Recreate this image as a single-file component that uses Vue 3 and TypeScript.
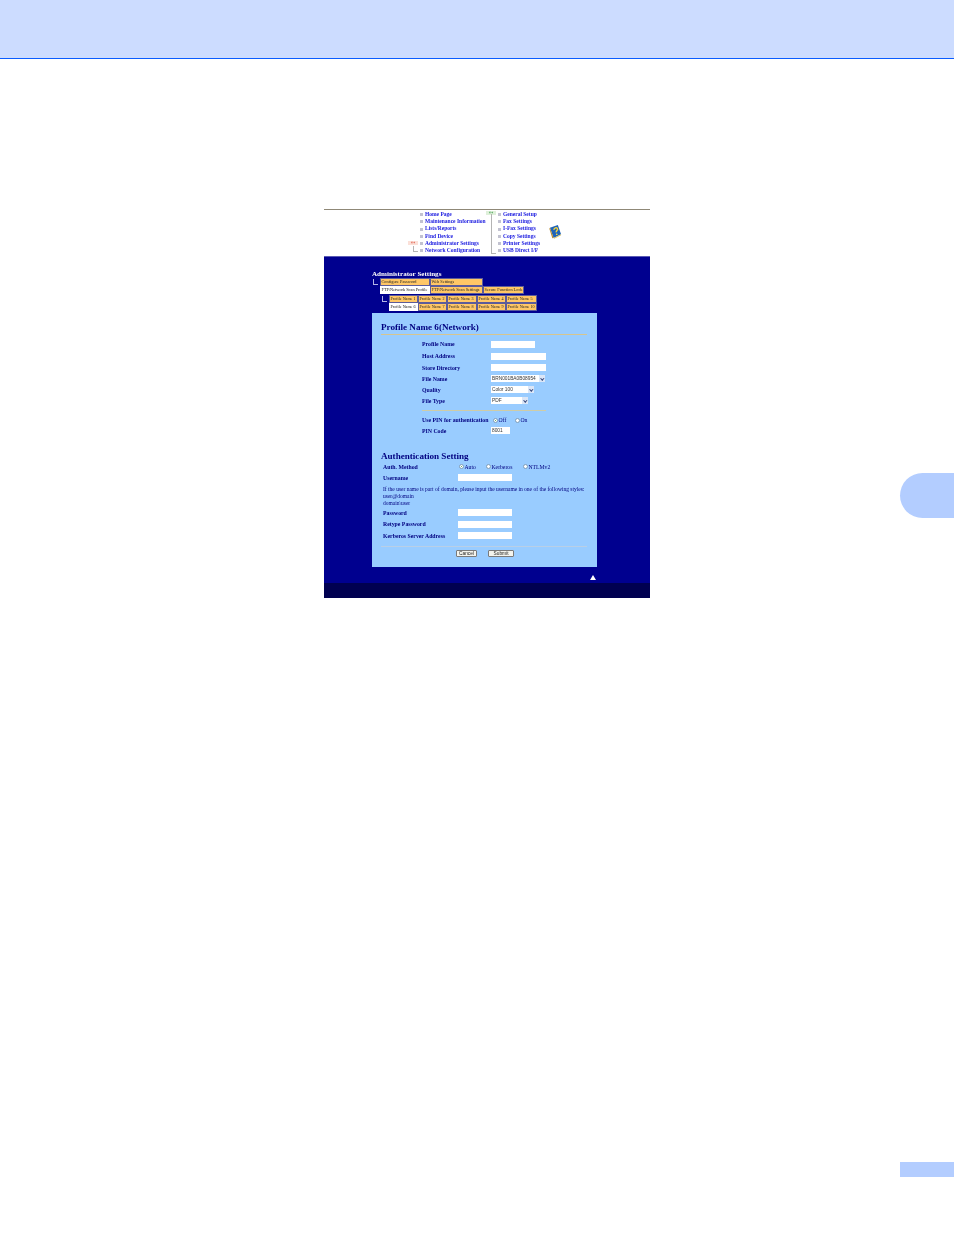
<script setup lang="ts">
const navLeft = ['Home Page', 'Maintenance Information', 'Lists/Reports', 'Find Device', 'Administrator Settings', 'Network Configuration']
const navRight = ['General Setup', 'Fax Settings', 'I-Fax Settings', 'Copy Settings', 'Printer Settings', 'USB Direct I/F']
const profiles = [1, 2, 3, 4, 5, 6, 7, 8, 9, 10].map((n) => `Profile Name ${n}`)
</script>

<template>
  <div class="page">
    <header class="band"></header>
    <main class="body">
      <div class="shot">
        <nav class="nav">
          <div class="col left">
            <span class="mark m-left">›››</span>
            <span class="hook h-left"></span>
            <div v-for="n in navLeft" :key="n" class="nav-item"><i class="bullet"></i>{{ n }}</div>
          </div>
          <div class="col right">
            <span class="mark m-right">›››</span>
            <span class="hook h-right"></span>
            <div v-for="n in navRight" :key="n" class="nav-item"><i class="bullet"></i>{{ n }}</div>
          </div>
          <svg class="help" viewBox="0 0 14 16" width="13" height="15">
            <path d="M1 4 9.5 1 13 11 5 15 Z" fill="#1f64b8" />
            <path d="M1 4 5 15 3.6 15.4 0.4 5 Z" fill="#b9892a" />
            <path d="M5 15 13 11 13 12 5.6 15.8 Z" fill="#d8c46a" />
            <path d="M5.4 6.2C5.2 4 8.6 3 9.2 5.2 9.6 6.8 7.4 7.2 7.8 9" fill="none" stroke="#f5d33c" stroke-width="1.5" />
            <circle cx="8.3" cy="11" r="0.9" fill="#f5d33c" />
          </svg>
        </nav>
        <section class="blue">
          <h2 class="admin">Administrator Settings</h2>
          <div class="tree">
            <span class="elbow e1"></span>
            <div class="tabs t1">
              <span class="tab">Configure Password</span>
              <span class="tab">Web Settings</span>
              <span class="tab empty"></span>
              <span class="tab on">FTP/Network Scan Profile</span>
              <span class="tab">FTP/Network Scan Settings</span>
              <span class="tab">Secure Function Lock</span>
            </div>
          </div>
          <div class="tree sub">
            <span class="elbow e2"></span>
            <div class="tabs t2">
              <span v-for="(p, i) in profiles" :key="p" class="tab" :class="{ on: i === 5 }">{{ p }}</span>
            </div>
          </div>
          <div class="panel">
            <h3 class="title">Profile Name 6(Network)</h3>
            <hr class="rule" />
            <div class="form upper">
              <label>Profile Name</label><input class="w44" />
              <label>Host Address</label><input class="w55" />
              <label>Store Directory</label><input class="w55" />
              <label>File Name</label><span class="select w54">BRN001BA0B08954<b></b></span>
              <label>Quality</label><span class="select w43">Color 100<b></b></span>
              <label>File Type</label><span class="select w37">PDF<b></b></span>
            </div>
            <hr class="rule short" />
            <div class="form pin">
              <label>Use PIN for authentication</label>
              <span class="radios pin-radios"><span class="radio"><i class="dot sel"></i>Off</span><span class="radio"><i class="dot"></i>On</span></span>
              <label>PIN Code</label><input class="w19" value="8001" />
            </div>
            <h3 class="title auth">Authentication Setting</h3>
            <div class="form lower">
              <label>Auth. Method</label>
              <span class="radios auth-radios"><span class="radio"><i class="dot sel"></i>Auto</span><span class="radio"><i class="dot"></i>Kerberos</span><span class="radio"><i class="dot"></i>NTLMv2</span></span>
              <label>Username</label><input class="w54" />
            </div>
            <p class="note">If the user name is part of domain, please input the username in one of the following styles:<br />user@domain<br />domain\user</p>
            <div class="form lower pw">
              <label>Password</label><input class="w54" />
              <label>Retype Password</label><input class="w54" />
              <label>Kerberos Server Address</label><input class="w54" />
            </div>
            <hr class="rule end" />
            <div class="buttons">
              <button class="btn cancel">Cancel</button>
              <button class="btn submit">Submit</button>
            </div>
          </div>
          <div class="top-row"><i class="top"></i></div>
        </section>
        <footer class="foot"></footer>
      </div>
      <div class="side"></div>
    </main>
    <div class="pageno"></div>
  </div>
</template>

<style>
html, body { margin: 0; background: #fff; }
</style>

<style scoped>
.page { width: 954px; height: 1235px; position: relative; overflow: hidden; background: #fff; font-family: "Liberation Serif", serif; }
.band { height: 58px; background: #ccdcff; border-bottom: 1px solid #0a5cff; }
.body { display: flex; padding: 150px 0 0 324px; }
.shot { width: 326px; height: 389px; display: flex; flex-direction: column; filter: blur(0.25px); }
.nav { height: 47px; border-top: 1px solid #8f8877; box-sizing: border-box; position: relative; background: #fff; display: flex; padding: 1px 0 0 95px; flex: none; }
.col { position: relative; box-sizing: border-box; }
.left { width: 78px; padding-left: 6px; }
.right { width: 62px; padding-left: 6px; }
.nav-item { font: bold 5.5px/7.2px "Liberation Serif", serif; color: #1a1ae0; white-space: nowrap; position: relative; }
.bullet { position: absolute; left: -5.5px; top: 2.2px; width: 3px; height: 3px; background: #c2c2d0; }
.mark { position: absolute; width: 10px; height: 4px; background: #dff0da; color: #1a8a2c; font: bold 4px/4px "Liberation Sans", sans-serif; text-align: center; overflow: hidden; }
.m-left { left: -11px; top: 30px; background: #fbe0d8; color: #d8321e; }
.m-right { left: -11px; top: 0; }
.hook { position: absolute; border-left: 1px solid #b4b4b4; border-bottom: 1px solid #b4b4b4; }
.h-left { left: -6px; top: 35px; width: 4px; height: 5px; }
.h-right { left: -6px; top: 3px; width: 4px; height: 39px; }
.help { position: absolute; left: 225px; top: 14px; }
.blue { height: 327px; flex: none; background: #00008f; border-top: 1px solid #5a5ab4; box-sizing: border-box; padding: 14px 0 0 48px; position: relative; }
.admin { margin: 0; font: bold 7.1px/7px "Liberation Serif", serif; color: #fff; white-space: nowrap; }
.tree { position: relative; padding-left: 8px; }
.sub { padding-left: 17px; margin-top: 1px; }
.elbow { position: absolute; border-left: 1px solid #b4b4e6; border-bottom: 1px solid #b4b4e6; width: 4px; height: 5px; }
.e1 { left: 1px; top: 1px; }
.e2 { left: 10px; top: 1px; }
.tabs { display: grid; }
.t1 { grid-template-columns: 50px 53px 41px; grid-auto-rows: 8px; }
.t2 { grid-template-columns: 29px 29px 30px 29px 31px; grid-auto-rows: 8px; }
.tab { box-sizing: border-box; background: #ffc766; border: 1px solid #5c5c9a; font-size: 4.3px; line-height: 6px; color: #222; padding-left: 0.5px; white-space: nowrap; overflow: hidden; }
.t2 .tab { font-size: 4.1px; }
.tab.on { background: #fff; border-color: #fff; color: #111; }
.tab.empty { visibility: hidden; }
.panel { width: 225px; height: 254px; box-sizing: border-box; background: #99ccff; margin-top: 2px; padding: 9px 10px 0 9px; }
.title { margin: 0; font: bold 9.1px/10px "Liberation Serif", serif; color: #000080; white-space: nowrap; }
.rule { margin: 2px 0 0; border: 0; height: 1px; background: #d7c58e; }
.rule.short { margin: 4px 0 0 41px; width: 124px; background: #cfcca6; }
.rule.end { margin: 4px 0 0; background: #b9cfe6; }
.form { display: grid; align-items: center; }
.form label { font-weight: bold; font-size: 5.8px; color: #000080; white-space: nowrap; }
.form input, .select { box-sizing: border-box; height: 7px; border: 0; padding: 0 0 0 1px; background: #fff; font: 4.8px/7px "Liberation Sans", sans-serif; color: #333; display: block; outline: none; }
.upper { grid-template-columns: 69px auto; grid-template-rows: 12px 12px 11px 11px 11px 11px; justify-content: start; margin: 3px 0 0 41px; justify-items: start; }
.pin { grid-template-columns: 69px auto; grid-template-rows: 10px 11px; justify-content: start; margin: 4px 0 0 41px; justify-items: start; }
.lower { grid-template-columns: 75px auto; grid-auto-rows: 11px; justify-content: start; margin: 0 0 0 2px; justify-items: start; }
.pw { margin-top: 0; grid-auto-rows: 11.5px; }
.w19 { width: 19px; } .w37 { width: 37px; } .w43 { width: 43px; } .w44 { width: 44px; } .w54 { width: 54px; } .w55 { width: 55px; }
.select { position: relative; overflow: hidden; white-space: nowrap; }
.select b { position: absolute; right: 0; top: 0; width: 6px; height: 7px; background: #dbe6f7; }
.select b::after { content: ""; position: absolute; left: 2px; top: 2.2px; width: 1.6px; height: 1.6px; border-right: 1px solid #33457a; border-bottom: 1px solid #33457a; transform: rotate(45deg); }
.radios { display: grid; align-items: center; }
.pin-radios { grid-template-columns: 22px 16px; margin-left: 2px; }
.auth-radios { grid-template-columns: 27px 37px 30px; margin-left: 1px; }
.radio { display: flex; align-items: center; font-size: 5.7px; color: #000080; }
.dot { width: 5px; height: 5px; border: 0.5px solid #7f9db9; border-radius: 50%; background: #fff; box-sizing: border-box; position: relative; margin-right: 0.5px; flex: none; }
.dot.sel::after { content: ""; position: absolute; inset: 1px; border-radius: 50%; background: #3a9a3a; }
.auth { margin-top: 15px; }
.note { margin: 3px 0 0 2px; font-size: 5.5px; line-height: 7px; color: #000080; white-space: nowrap; }
.buttons { display: flex; gap: 11px; margin: 3px 0 0 75px; }
.btn { box-sizing: border-box; height: 7px; padding: 0; background: #f4f4ee; border: 0.5px solid #7a7a7a; border-radius: 1px; font: 4.8px/6px "Liberation Sans", sans-serif; color: #222; }
.cancel { width: 21px; }
.submit { width: 26px; }
.top-row { position: absolute; left: 266px; top: 318px; }
.top { display: block; width: 0; height: 0; border-left: 3px solid transparent; border-right: 3px solid transparent; border-bottom: 5px solid #fff; }
.foot { flex: none; height: 15px; background: #000050; }
.side { position: absolute; left: 900px; top: 473px; width: 54px; height: 45px; background: #b3cdff; border-radius: 22.5px 0 0 22.5px; }
.pageno { position: absolute; left: 900px; top: 1162px; width: 54px; height: 15px; background: #b3cdff; }
</style>
